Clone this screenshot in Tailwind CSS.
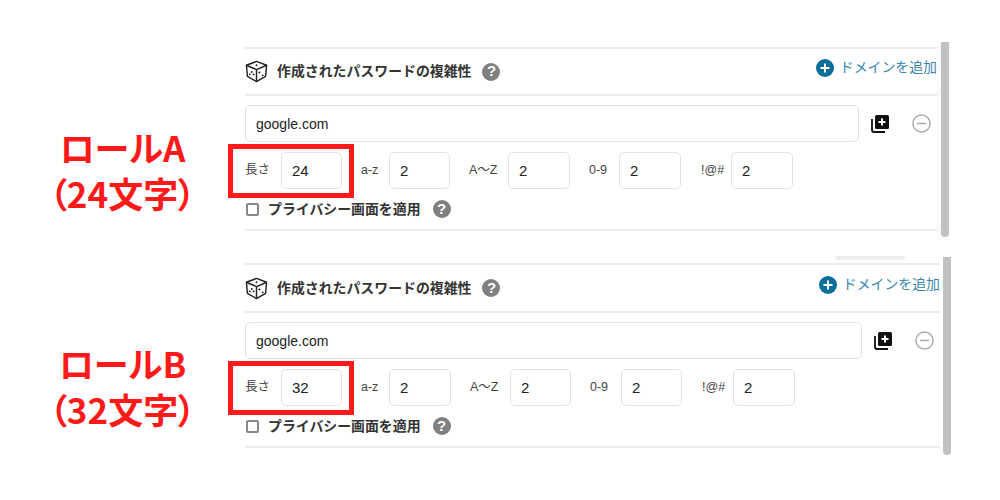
<!DOCTYPE html>
<html lang="ja">

<head>
    <meta charset="UTF-8">
    <meta name="viewport" content="width=device-width, initial-scale=1.0">
    <title>password roles</title>
    <script src="https://cdn.jsdelivr.net/npm/@tailwindcss/browser@4"></script>
</head>

<body class="bg-white">
    <div class="w-[1000px] h-[500px] overflow-hidden flex font-['Liberation_Sans','Noto_Sans_CJK_JP',sans-serif] text-[#333]">

        <!-- red role labels -->
        <div class="w-[245px] shrink-0 pt-[124px] text-center text-[#ff1a1a] font-bold text-[35px] leading-[46px] font-['Noto_Sans_CJK_JP',sans-serif] [font-feature-settings:'palt']">
            <div>
                <p>ロールA</p>
                <p>（24文字）</p>
            </div>
            <div class="mt-[124px]">
                <p>ロールB</p>
                <p>（32文字）</p>
            </div>
        </div>

        <div class="w-[755px] pt-[42px]">

            <!-- role A panel -->
            <div class="relative flex items-stretch w-[705px] h-[198px]">
                <div class="w-[692px] pt-[5px]">
                    <div class="h-[49px] flex items-center border-y-2 border-[#ececec]">
                        <svg class="w-[23px] h-[23px]" viewBox="0 0 24 24" fill="none" stroke="#222" stroke-width="1.5" stroke-linejoin="round"><path d="M12 1.5 22.5 5.5 21.5 17 12 22.5 2.5 17 1.5 5.5Z"/><path d="M1.5 5.5 12 10 22.5 5.5M12 10V22.5"/><circle cx="12" cy="5.5" r="1" fill="#222" stroke="none"/><circle cx="5" cy="15" r="1" fill="#222" stroke="none"/><circle cx="7" cy="12.5" r="1" fill="#222" stroke="none"/><circle cx="9" cy="15" r="1" fill="#222" stroke="none"/><circle cx="15" cy="13" r="1" fill="#222" stroke="none"/><circle cx="18.500" cy="16" r="1" fill="#222" stroke="none"/></svg>
                        <span class="ml-[9px] text-[13.9px] font-bold">作成されたパスワードの複雑性</span>
                        <span class="ml-[11px] w-[18px] h-[18px] rounded-full bg-[#808080] text-white text-[15px] font-bold flex items-center justify-center">?</span>
                        <span class="ml-auto -mt-[7px] flex items-center text-[13.9px] leading-none text-[#3a86ad]">
                            <svg class="w-[18px] h-[18px] mr-[6px]" viewBox="0 0 18 18"><circle cx="9" cy="9" r="9" fill="#0a6e99"/><path d="M9 4.500v9M4.500 9h9" stroke="#fff" stroke-width="2"/></svg>
                            ドメインを追加
                        </span>
                    </div>
                    <div class="mt-[9px] flex items-center">
                        <input value="google.com" class="w-[614px] h-[37px] px-[10px] text-[14px] text-[#222] border border-[#e3e3e3] rounded-[5px]">
                        <svg class="ml-[12px] w-[19px] h-[19px]" viewBox="0 0 19 19"><path d="M1 5v11a2 2 0 0 0 2 2h11" fill="none" stroke="#111" stroke-width="1.800"/><rect x="4" y="1" width="14" height="14" rx="1.500" fill="#111"/><path d="M11 4.500v7M7.500 8h7" stroke="#fff" stroke-width="2"/></svg>
                        <svg class="ml-[22px] w-[19px] h-[19px]" viewBox="0 0 19 19" fill="none" stroke="#aaa" stroke-width="1.500"><circle cx="9.500" cy="9.500" r="8.600"/><path d="M5 9.500h9"/></svg>
                    </div>
                    <div class="mt-[10px] flex items-center text-[12.5px] text-[#444]">
                        <span class="w-[36px]">長さ</span>
                        <input value="24" class="w-[61px] h-[37px] px-[10px] text-[15px] text-[#222] border border-[#e3e3e3] rounded-[5px]">
                        <span class="ml-[19px] w-[28px]">a-z</span>
                        <input value="2" class="w-[61px] h-[37px] px-[10px] text-[15px] text-[#222] border border-[#e3e3e3] rounded-[5px]">
                        <span class="ml-[19px] w-[39px]">A～Z</span>
                        <input value="2" class="w-[62px] h-[37px] px-[10px] text-[15px] text-[#222] border border-[#e3e3e3] rounded-[5px]">
                        <span class="ml-[19px] w-[30px]">0-9</span>
                        <input value="2" class="w-[62px] h-[37px] px-[10px] text-[15px] text-[#222] border border-[#e3e3e3] rounded-[5px]">
                        <span class="ml-[20px] w-[30px]">!@#</span>
                        <input value="2" class="w-[62px] h-[37px] px-[10px] text-[15px] text-[#222] border border-[#e3e3e3] rounded-[5px]">
                    </div>
                    <div class="mt-[11px] h-[18px] flex items-center">
                        <span class="ml-[1px] w-[13px] h-[13px] border-2 border-[#888] rounded-[2px]"></span>
                        <span class="ml-[9px] text-[13.9px] font-bold">プライバシー画面を適用</span>
                        <span class="ml-[12px] w-[18px] h-[18px] rounded-full bg-[#808080] text-white text-[15px] font-bold flex items-center justify-center">?</span>
                    </div>
                    <div class="mt-[11px] border-t-2 border-[#ececec]"></div>
                </div>
                <div class="w-[13px] bg-[#fafafa] pl-[4px]">
                    <div class="w-[8px] h-[195px] bg-[#c1c1c1] rounded-b-[4px]"></div>
                </div>
                <div class="absolute left-[-17px] top-[102px] w-[126px] h-[54px] border-[5px] border-[#ff1a1a]"></div>
            </div>

            <!-- role B panel -->
            <div class="relative flex items-stretch w-[706px] h-[198px] mt-[17px]">
                <div class="absolute left-[590px] -top-[1px] w-[70px] h-[4px] bg-[#eeeeee] rounded-b-[6px]"></div>
                <div class="w-[695px] pt-[6px]">
                    <div class="h-[50px] flex items-center border-y-2 border-[#ececec]">
                        <svg class="w-[23px] h-[23px]" viewBox="0 0 24 24" fill="none" stroke="#222" stroke-width="1.5" stroke-linejoin="round"><path d="M12 1.5 22.5 5.5 21.5 17 12 22.5 2.5 17 1.5 5.5Z"/><path d="M1.5 5.5 12 10 22.5 5.5M12 10V22.5"/><circle cx="12" cy="5.5" r="1" fill="#222" stroke="none"/><circle cx="5" cy="15" r="1" fill="#222" stroke="none"/><circle cx="7" cy="12.5" r="1" fill="#222" stroke="none"/><circle cx="9" cy="15" r="1" fill="#222" stroke="none"/><circle cx="15" cy="13" r="1" fill="#222" stroke="none"/><circle cx="18.500" cy="16" r="1" fill="#222" stroke="none"/></svg>
                        <span class="ml-[9px] text-[13.9px] font-bold">作成されたパスワードの複雑性</span>
                        <span class="ml-[11px] w-[18px] h-[18px] rounded-full bg-[#808080] text-white text-[15px] font-bold flex items-center justify-center">?</span>
                        <span class="ml-auto -mt-[7px] flex items-center text-[13.9px] leading-none text-[#3a86ad]">
                            <svg class="w-[18px] h-[18px] mr-[6px]" viewBox="0 0 18 18"><circle cx="9" cy="9" r="9" fill="#0a6e99"/><path d="M9 4.500v9M4.500 9h9" stroke="#fff" stroke-width="2"/></svg>
                            ドメインを追加
                        </span>
                    </div>
                    <div class="mt-[9px] flex items-center">
                        <input value="google.com" class="w-[617px] h-[37px] px-[10px] text-[14px] text-[#222] border border-[#e3e3e3] rounded-[5px]">
                        <svg class="ml-[12px] w-[19px] h-[19px]" viewBox="0 0 19 19"><path d="M1 5v11a2 2 0 0 0 2 2h11" fill="none" stroke="#111" stroke-width="1.800"/><rect x="4" y="1" width="14" height="14" rx="1.500" fill="#111"/><path d="M11 4.500v7M7.500 8h7" stroke="#fff" stroke-width="2"/></svg>
                        <svg class="ml-[22px] w-[19px] h-[19px]" viewBox="0 0 19 19" fill="none" stroke="#aaa" stroke-width="1.500"><circle cx="9.500" cy="9.500" r="8.600"/><path d="M5 9.500h9"/></svg>
                    </div>
                    <div class="mt-[10px] flex items-center text-[12.5px] text-[#444]">
                        <span class="w-[36px]">長さ</span>
                        <input value="32" class="w-[61px] h-[37px] px-[10px] text-[15px] text-[#222] border border-[#e3e3e3] rounded-[5px]">
                        <span class="ml-[19px] w-[28px]">a-z</span>
                        <input value="2" class="w-[62px] h-[37px] px-[10px] text-[15px] text-[#222] border border-[#e3e3e3] rounded-[5px]">
                        <span class="ml-[19px] w-[40px]">A～Z</span>
                        <input value="2" class="w-[61px] h-[37px] px-[10px] text-[15px] text-[#222] border border-[#e3e3e3] rounded-[5px]">
                        <span class="ml-[19px] w-[31px]">0-9</span>
                        <input value="2" class="w-[61px] h-[37px] px-[10px] text-[15px] text-[#222] border border-[#e3e3e3] rounded-[5px]">
                        <span class="ml-[20px] w-[31px]">!@#</span>
                        <input value="2" class="w-[62px] h-[37px] px-[10px] text-[15px] text-[#222] border border-[#e3e3e3] rounded-[5px]">
                    </div>
                    <div class="mt-[11px] h-[18px] flex items-center">
                        <span class="ml-[1px] w-[13px] h-[13px] border-2 border-[#888] rounded-[2px]"></span>
                        <span class="ml-[9px] text-[13.9px] font-bold">プライバシー画面を適用</span>
                        <span class="ml-[12px] w-[18px] h-[18px] rounded-full bg-[#808080] text-white text-[15px] font-bold flex items-center justify-center">?</span>
                    </div>
                    <div class="mt-[11px] border-t-2 border-[#ececec]"></div>
                </div>
                <div class="w-[11px] pl-[3px]">
                    <div class="w-[8px] h-[198px] bg-[#c1c1c1] rounded-b-[4px]"></div>
                </div>
                <div class="absolute left-[-17px] top-[104px] w-[126px] h-[54px] border-[5px] border-[#ff1a1a]"></div>
            </div>
        </div>
    </div>
</body>

</html>
